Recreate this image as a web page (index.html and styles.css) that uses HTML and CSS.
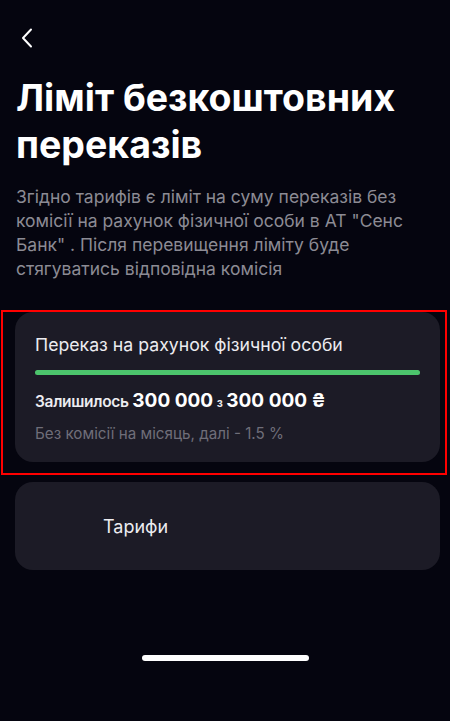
FILE: index.html
```html
<!DOCTYPE html>
<html lang="uk">
<head>
  <meta charset="UTF-8" />
  <meta name="viewport" content="width=device-width, initial-scale=1.0" />
  <title>Ліміт безкоштовних переказів</title>
  <link rel="stylesheet" href="styles.css">
</head>
<body>
  <div class="screen">
    <button class="back" aria-label="Назад">
      <svg width="12" height="20" viewBox="0 0 12 20">
        <path d="M10 1.5 L2 10 L10 18.5" fill="none" stroke="#ffffff" stroke-width="2" stroke-linecap="round" stroke-linejoin="round"/>
      </svg>
    </button>

    <h1 class="title">Ліміт безкоштовних переказів</h1>

    <p class="intro">Згідно тарифів є ліміт на суму переказів без комісії на рахунок фізичної особи в АТ "Сенс Банк" . Після перевищення ліміту буде стягуватись відповідна комісія</p>

    <div class="marked">
      <div class="card limit">
        <div class="limit-name">Переказ на рахунок фізичної особи</div>
        <div class="bar"><div class="bar-fill" style="width: 100%"></div></div>
        <div class="left">
          Залишилось <b>300 000</b> <span class="of">з</span> <b>300 000 ₴</b>
        </div>
        <div class="note">Без комісії на місяць, далі - 1.5 %</div>
      </div>
    </div>

    <div class="card tariffs">Тарифи</div>

    <div class="home-bar"></div>
  </div>
</body>
</html>
```

FILE: styles.css
```css
:root {
  --bg-color: #05050f;
  --card-bg: #1c1b26;
  --text-color: #ffffff;
  --muted: #8c8b94;
  --accent: #4cc46c;
}

body {
  margin: 0;
  background: var(--bg-color);
  color: var(--text-color);
  font-family: Inter, "Noto Sans", sans-serif;
}

.screen {
  height: 721px;
  padding: 0 10px 0 15px;
  box-sizing: border-box;
  display: flex;
  flex-direction: column;
}

.back {
  align-self: flex-start;
  background: none;
  border: none;
  padding: 0;
  margin: 28px 0 0 6px;
  width: 12px;
  height: 20px;
  cursor: pointer;
}

.back svg {
  display: block;
}

.title {
  margin: 26px 0 0 1px;
  font-size: 37.5px;
  font-weight: 700;
  line-height: 47px;
}

.intro {
  margin: 17px 0 0 1px;
  font-size: 17.5px;
  line-height: 24px;
  color: var(--muted);
}

.marked {
  position: relative;
  margin-top: 31px;
}

.marked::after {
  content: "";
  position: absolute;
  top: -2px;
  left: -14px;
  right: -7px;
  bottom: -13px;
  border: 2px solid #ff0000;
  pointer-events: none;
}

.card {
  background: var(--card-bg);
  border-radius: 18px;
}

.limit {
  padding: 22px 20px 18px 20px;
}

.limit-name {
  font-size: 17.7px;
  line-height: 22px;
  color: #ececf0;
}

.bar {
  height: 5px;
  margin: 14px 0 0 0;
  background: #2e2d38;
  border-radius: 3px;
}

.bar-fill {
  height: 100%;
  background: var(--accent);
  border-radius: 3px;
}

.left {
  margin-top: 14px;
  font-size: 15.5px;
  font-weight: 600;
  line-height: 24px;
  color: #ececf0;
  letter-spacing: -0.3px;
}

.left b {
  font-size: 19px;
  font-weight: 700;
  color: #ffffff;
  letter-spacing: 0;
}

.left .of {
  font-size: 12px;
}

.note {
  margin-top: 9px;
  font-size: 15.2px;
  line-height: 20px;
  color: #6f6e79;
}

.tariffs {
  margin-top: 20px;
  height: 88px;
  display: flex;
  align-items: center;
  padding-left: 88px;
  font-size: 18px;
  color: #ececf0;
}

.home-bar {
  width: 167px;
  height: 6px;
  border-radius: 3px;
  background: #ffffff;
  margin: 85px auto 0 auto;
  position: relative;
  left: -2px;
}
```
